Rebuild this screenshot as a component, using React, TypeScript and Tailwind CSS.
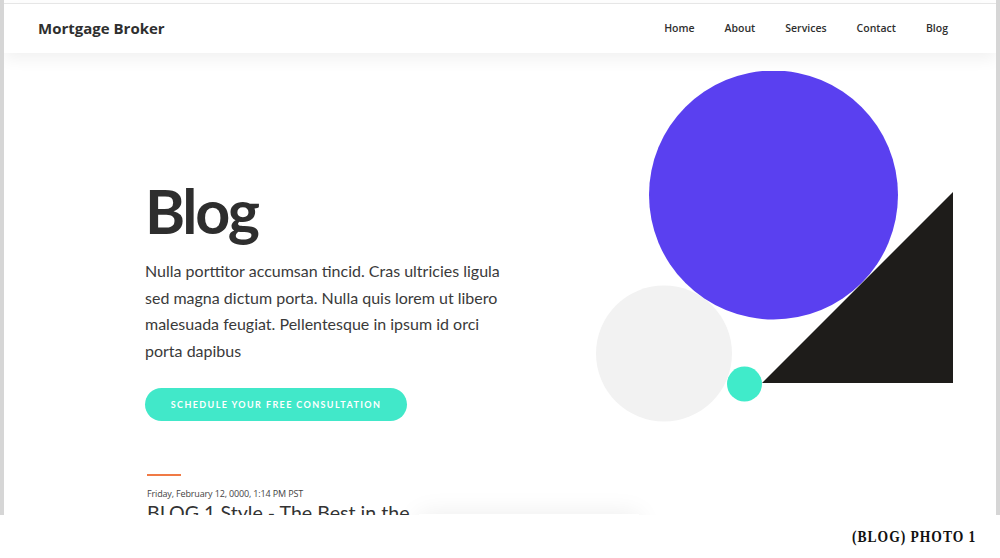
import React from "react";

const navItems = ["Home", "About", "Services", "Contact", "Blog"];

const openSans = { fontFamily: '"Open Sans", "Liberation Sans", sans-serif' };
const lato = { fontFamily: 'Lato, "Liberation Sans", sans-serif' };

const Shapes = () => (
  <svg width="357" height="351" viewBox="0 0 357 351" className="shrink-0">
    <circle cx="68" cy="282.5" r="68" fill="#f2f2f2" />
    <circle cx="177.5" cy="124" r="124.5" fill="#5a40f0" />
    <polygon points="357,121 357,312 166,312" fill="#1e1c1a" />
    <circle cx="148.5" cy="313" r="17.5" fill="#40ebca" />
  </svg>
);

export default function App() {
  return (
    <div className="w-[1000px] h-[558px] bg-white flex flex-col">
      <div className="h-[515px] border-x-4 border-[#d6d6d6] overflow-hidden flex flex-col pt-[3px]">
        <header
          className="relative z-10 h-[50px] shrink-0 flex items-center justify-between pl-[34px] pr-[48px] border-t border-[#e6e6e6] bg-white shadow-[0_6px_16px_rgba(0,0,0,0.06)]"
          style={openSans}
        >
          <span className="text-[15px] font-bold text-[#2f2f2f]">Mortgage Broker</span>
          <nav className="flex items-center gap-[30px] text-[10.5px] font-semibold text-[#2f2f2f]">
            {navItems.map((item) => (
              <a key={item} href="#">
                {item}
              </a>
            ))}
          </nav>
        </header>

        <section className="flex">
          <div className="pl-[141px] pt-[127px] w-[520px]" style={lato}>
            <h1 className="text-[61px] leading-[61px] font-bold tracking-[-2.3px] text-[#2e2e2e]">Blog</h1>
            <p className="mt-[17px] w-[370px] text-[16px] leading-[26.6px] text-[#3a3a3a]">
              Nulla porttitor accumsan tincid. Cras ultricies ligula sed magna dictum porta. Nulla
              quis lorem ut libero malesuada feugiat. Pellentesque in ipsum id orci porta dapibus
            </p>
            <button className="mt-[24px] w-[262px] h-[33px] rounded-full bg-[#41e8c9] text-white text-[9px] font-bold tracking-[1.4px] uppercase">
              Schedule your free consultation
            </button>
          </div>
          <div className="ml-auto mr-[43px] mt-[18px]">
            <Shapes />
          </div>
        </section>

        <section className="flex pl-[143px] mt-[52px]">
          <div className="w-[270px]">
            <div className="w-[34px] h-[2px] bg-[#f07a45]" />
            <p className="mt-[12px] text-[9px] leading-[12px] text-[#444] tracking-[-0.15px]" style={openSans}>
              Friday, February 12, 0000, 1:14 PM PST
            </p>
            <h2 className="mt-[1px] text-[19.6px] leading-[24px] text-[#333] whitespace-nowrap" style={lato}>
              BLOG 1 Style - The Best in the
            </h2>
          </div>
          <div className="ml-[2px] mt-[40px] w-[220px] h-[200px] bg-white shadow-[0_0_24px_rgba(0,0,0,0.08)]" />
        </section>
      </div>

      <div className="flex-1 flex justify-end items-center pr-[24px] pt-[1px]">
        <span
          className="inline-block origin-right scale-x-[0.8] text-[17px] font-bold tracking-[1.2px] text-[#111]"
          style={{ fontFamily: '"Liberation Serif", "Times New Roman", serif' }}
        >
          (BLOG) PHOTO 1
        </span>
      </div>
    </div>
  );
}
